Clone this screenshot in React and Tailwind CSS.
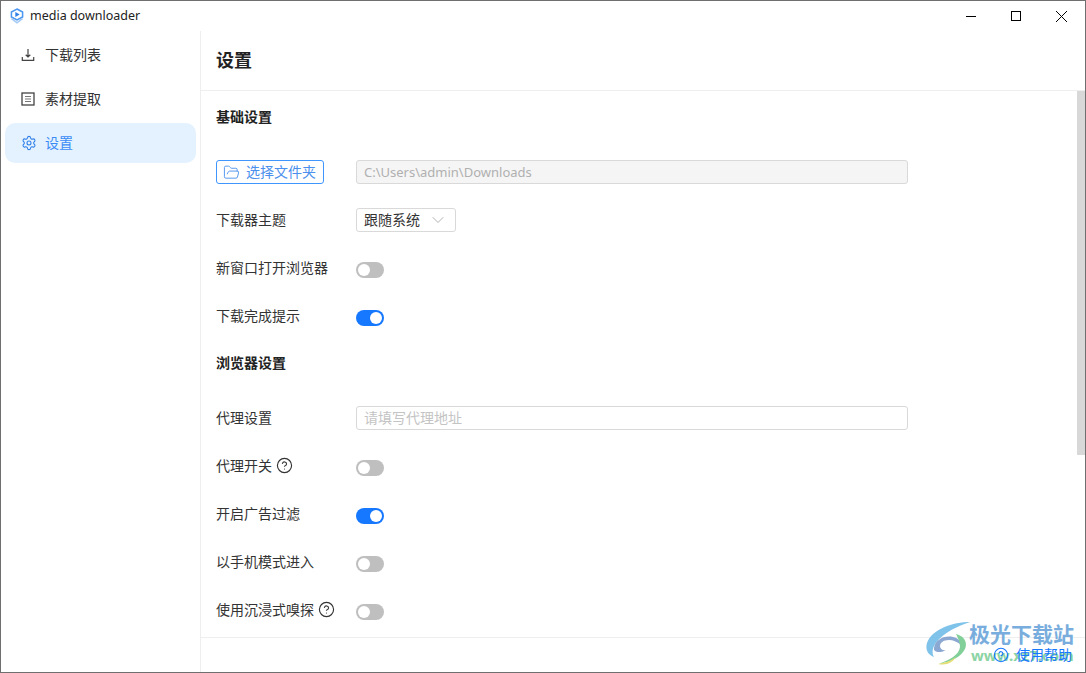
import { ChevronDown, CircleHelp, FolderOpen, Settings } from "lucide-react";

const font = { fontFamily: '"Noto Sans", "Noto Sans CJK SC", sans-serif' };

function Toggle({ on }) {
  return (
    <div className={`mt-1 w-[28px] h-[16px] rounded-full flex items-center px-[2px] ${on ? "bg-[#1677ff] justify-end" : "bg-[#bfbfbf] justify-start"}`}>
      <div className="w-[12px] h-[12px] rounded-full bg-white" />
    </div>
  );
}

function Row({ label, help, children }) {
  return (
    <div className="h-[48px] flex items-center">
      <div className="w-[140px] pb-[2px] flex items-center gap-[4px] text-[14px] text-[#333]">
        {label}
        {help && <CircleHelp size={17} strokeWidth={1.6} className="text-[#333]" />}
      </div>
      {children}
    </div>
  );
}

function SideItem({ icon, label, active }) {
  return (
    <div className={`h-[40px] rounded-[10px] flex items-center pl-[16px] text-[14px] ${active ? "bg-[#e4f2ff] text-[#3a8bf5]" : "text-[#333]"}`}>
      <div className="w-[24px] flex items-center">{icon}</div>
      <span className="pb-[2px]">{label}</span>
    </div>
  );
}

function DownloadIcon() {
  return (
    <svg width="14" height="14" viewBox="0 0 14 14" fill="none" stroke="#444" strokeWidth="1.2">
      <path d="M7 1v7.500M4.700 6.800 7 9l2.300-2.200M1.300 9v3.400h11.400V9" />
    </svg>
  );
}

function ListIcon() {
  return (
    <svg width="14" height="14" viewBox="0 0 14 14" fill="none">
      <rect x="1" y="1" width="12" height="12" stroke="#444" strokeWidth="1.300" />
      <path d="M4 4.500h6M4 7h6M4 9.500h6" stroke="#777" strokeWidth="1.100" />
    </svg>
  );
}

function AppLogo() {
  return (
    <svg width="14" height="16" viewBox="0 0 14 16" fill="none">
      <path d="M7 1 12.600 4v5L7 12 1.400 9V4z" stroke="#4a96f0" strokeWidth="1.500" />
      <path d="M5.300 4 9.700 6.500 5.300 9z" fill="#2f7fe8" />
      <path d="M1.500 10.500 7 14.800l5.500-4.300" stroke="#a5cbf5" strokeWidth="1.600" />
    </svg>
  );
}

function WatermarkLogo() {
  return (
    <svg width="46" height="44" viewBox="0 0 46 44" fill="none">
      <path d="M45 1C28 1 7 8 2 22c-2 7 1 12 7 14C4 28 12 12 45 1z" fill="#72bde9" />
      <path d="M9 27c1-8 10-13 19-11 5 1 8 4 8 8-3-3-8-5-12-5-6 0-9 3-9 6 0 3 3 5 6 4-4 3-13 3-12-2z" fill="#7f9fce" />
      <path d="M31 13c8 2 12 8 9 15-4 8-14 13-27 15 12-4 21-9 22-17 0-5-2-9-4-13z" fill="#74cc8e" />
      <path d="M13 43c6-1 13-3 18-7-3 5-9 9-18 7z" fill="#e4db66" />
    </svg>
  );
}

export default function App() {
  return (
    <div style={font} className="relative w-[1086px] h-[673px] bg-white border border-[#6f6f6f] flex flex-col overflow-hidden">
      {/* Title bar */}
      <div className="h-[30px] shrink-0 flex items-center">
        <div className="pl-[9px] flex items-center gap-[6px] flex-1 text-[12.500px] text-[#222]">
          <AppLogo />
          media downloader
        </div>
        <div className="flex items-center pr-[18px] gap-[35px]">
          <div className="w-[10px] h-px bg-black" />
          <div className="w-[10px] h-[10px] border border-black" />
          <svg width="11" height="11" viewBox="0 0 10 10" stroke="#000" strokeWidth="0.9">
            <path d="M0 0l10 10M10 0 0 10" />
          </svg>
        </div>
      </div>

      <div className="flex-1 flex min-h-0">
        {/* Sidebar */}
        <div className="w-[200px] shrink-0 border-r border-[#eeeeee] px-[4px] pt-[4px] flex flex-col gap-[4px]">
          <SideItem icon={<DownloadIcon />} label="下载列表" />
          <SideItem icon={<ListIcon />} label="素材提取" />
          <SideItem active icon={<Settings size={16} strokeWidth={1.6} className="text-[#2f7fe8]" />} label="设置" />
        </div>

        <div className="flex-1 flex flex-col min-w-0">
          <div className="h-[60px] shrink-0 border-b border-[#eeeeee] pl-[15px] flex items-center text-[18px] font-bold text-[#222]">
            设置
          </div>

          <div className="h-[547px] shrink-0 flex border-b border-[#eeeeee]">
            <div className="flex-1 pl-[15px]">
              <div className="h-[52px] pb-[2px] flex items-center text-[14px] font-bold text-[#222]">基础设置</div>
              <div className="mt-[5px]">
                <Row
                  label={
                    <div className="w-[108px] h-[24px] mt-[2px] rounded-[3px] border border-[#4096ff] text-[#4a90ec] flex items-center pl-[6px] gap-[6px] text-[14px]">
                      <FolderOpen size={17} strokeWidth={1.3} />
                      <span className="pb-[2px]">选择文件夹</span>
                    </div>
                  }
                >
                  <div className="w-[552px] h-[24px] rounded-[3px] border border-[#d9d9d9] bg-[#f5f5f5] px-[7px] pt-px flex items-center text-[13px] text-[#b0b0b0]">
                    C:\Users\admin\Downloads
                  </div>
                </Row>
                <Row label="下载器主题">
                  <div className="w-[100px] h-[24px] rounded-[3px] border border-[#d9d9d9] pl-[7px] pr-[7px] flex items-center justify-between text-[14px] text-[#333]">
                    <span className="pb-[2px]">跟随系统</span>
                    <ChevronDown size={20} strokeWidth={0.9} className="text-[#999]" />
                  </div>
                </Row>
                <Row label="新窗口打开浏览器"><Toggle /></Row>
                <Row label="下载完成提示"><Toggle on /></Row>
              </div>

              <div className="h-[46px] pb-[2px] flex items-center text-[14px] font-bold text-[#222]">浏览器设置</div>
              <div className="mt-[8px]">
                <Row label="代理设置">
                  <div className="w-[552px] h-[24px] rounded-[3px] border border-[#d9d9d9] px-[7px] flex items-center text-[14px] text-[#c4c4c4]">
                    <span className="pb-[2px]">请填写代理地址</span>
                  </div>
                </Row>
                <Row label="代理开关" help><Toggle /></Row>
                <Row label="开启广告过滤"><Toggle on /></Row>
                <Row label="以手机模式进入"><Toggle /></Row>
                <Row label="使用沉浸式嗅探" help><Toggle /></Row>
              </div>
            </div>
            {/* Scrollbar */}
            <div className="w-[8px] shrink-0">
              <div className="h-[364px] bg-[#d8d8d8]" />
            </div>
          </div>

          {/* Footer */}
          <div className="relative z-10 flex-1 flex items-center justify-end pr-[13px] gap-[7px] text-[14px] text-[#1677ff]">
            <CircleHelp size={16} strokeWidth={1.6} />
            <span className="pb-[2px]">使用帮助</span>
          </div>
        </div>
      </div>

      {/* Watermark */}
      <div className="absolute left-[924px] top-[620px] flex opacity-90 pointer-events-none">
        <WatermarkLogo />
        <div className="flex flex-col -ml-[2px]">
          <div className="text-[21px] leading-[26px] font-bold text-[#6aa5da] whitespace-nowrap">极光下载站</div>
          <div className="ml-[2px] text-[15px] leading-[16px] font-bold text-[#7fd09a] whitespace-nowrap">www.xz7.com</div>
        </div>
      </div>
    </div>
  );
}
